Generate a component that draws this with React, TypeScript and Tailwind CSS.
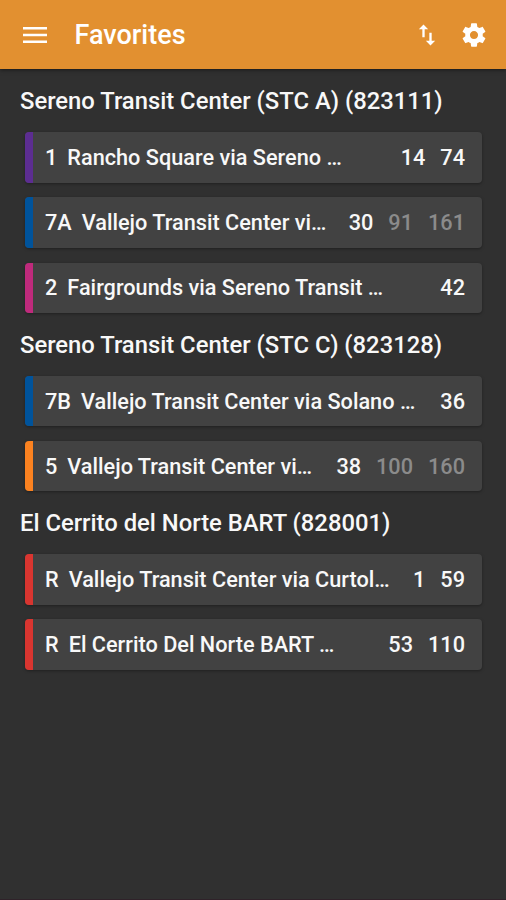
import React from "react";

type Arrival = { minutes: string; dim?: boolean };
type Route = { color: string; name: string; dest: string; times: Arrival[] };
type Stop = { title: string; routes: Route[] };

const stops: Stop[] = [
  { title: "Sereno Transit Center (STC A) (823111)", routes: [
    { color: "bg-[#5c2d91]", name: "1", dest: "Rancho Square via Sereno …", times: [{ minutes: "14" }, { minutes: "74" }] },
    { color: "bg-[#00539b]", name: "7A", dest: "Vallejo Transit Center vi…", times: [{ minutes: "30" }, { minutes: "91", dim: true }, { minutes: "161", dim: true }] },
    { color: "bg-[#bf2a7c]", name: "2", dest: "Fairgrounds via Sereno Transit …", times: [{ minutes: "42" }] },
  ] },
  { title: "Sereno Transit Center (STC C) (823128)", routes: [
    { color: "bg-[#00539b]", name: "7B", dest: "Vallejo Transit Center via Solano …", times: [{ minutes: "36" }] },
    { color: "bg-[#fb8220]", name: "5", dest: "Vallejo Transit Center vi…", times: [{ minutes: "38" }, { minutes: "100", dim: true }, { minutes: "160", dim: true }] },
  ] },
  { title: "El Cerrito del Norte BART (828001)", routes: [
    { color: "bg-[#d93530]", name: "R", dest: "Vallejo Transit Center via Curtol…", times: [{ minutes: "1" }, { minutes: "59" }] },
    { color: "bg-[#d93530]", name: "R", dest: "El Cerrito Del Norte BART …", times: [{ minutes: "53" }, { minutes: "110" }] },
  ] },
];

export default function App() {
  return (
    <div className="flex h-[900px] w-[506px] flex-col overflow-hidden border-b border-[#2f2229] bg-[#303030] font-['Roboto',sans-serif] font-medium text-[#f8f8f8]">
      <header className="flex h-[69px] shrink-0 items-center bg-[#e29030] pl-[23px] pr-[18.5px] text-white shadow-[0_1px_4px_rgba(0,0,0,0.5)]">
        <svg width="24" height="16" viewBox="0 0 24 16" fill="#fff"><path d="M0 0h24v2.6H0zM0 6.7h24v2.6H0zM0 13.4h24V16H0z" /></svg>
        <h1 className="ml-[27.5px] pt-[2px] text-[27px] leading-none">Favorites</h1>
        <svg className="ml-auto" width="28" height="28" viewBox="0 0 24 24" fill="#fff"><path d="M16 17.01V10h-2v7.01h-3L15 21l4-3.99h-3zM9 3L5 6.99h3V14h2V6.99h3L9 3z" /></svg>
        <svg className="ml-[18.5px]" width="28" height="28" viewBox="0 0 24 24" fill="#fff"><path d="M19.43 12.98c.04-.32.07-.64.07-.98s-.03-.66-.07-.98l2.11-1.65c.19-.15.24-.42.12-.64l-2-3.46c-.12-.22-.39-.3-.61-.22l-2.49 1c-.52-.4-1.08-.73-1.69-.98l-.38-2.65C14.46 2.18 14.25 2 14 2h-4c-.25 0-.46.18-.49.42l-.38 2.65c-.61.25-1.17.59-1.69.98l-2.49-1c-.23-.09-.49 0-.61.22l-2 3.46c-.13.22-.07.49.12.64l2.11 1.65c-.04.32-.07.65-.07.98s.03.66.07.98l-2.11 1.65c-.19.15-.24.42-.12.64l2 3.46c.12.22.39.3.61.22l2.49-1c.52.4 1.08.73 1.69.98l.38 2.65c.03.24.24.42.49.42h4c.25 0 .46-.18.49-.42l.38-2.65c.61-.25 1.17-.59 1.69-.98l2.49 1c.23.09.49 0 .61-.22l2-3.46c.12-.22.07-.49-.12-.64l-2.11-1.65zM12 15.5c-1.93 0-3.5-1.57-3.5-3.5s1.57-3.5 3.5-3.5 3.5 1.57 3.5 3.5-1.57 3.5-3.5 3.5z" /></svg>
      </header>
      <main className="flex flex-col pl-[20px] pr-[24px] pt-[0.4px]">
        {stops.map((s) => (
          <section key={s.title} className="flex flex-col">
            <h2 className="flex h-[63px] items-center whitespace-nowrap pt-[2px] text-[23.8px] leading-none">{s.title}</h2>
            <ul className="ml-[5px] flex flex-col gap-[14.7px]">
              {s.routes.map((r) => (
                <li key={r.dest} className="flex h-[50.4px] items-center overflow-hidden rounded-[4px] bg-[#424242] pr-[17px] text-[21.7px] leading-none shadow-[0_1px_3px_rgba(0,0,0,0.35)]">
                  <span className={"mr-[12px] h-full w-2 " + r.color} />
                  <span className="pt-[0.6px]">{r.name}</span>
                  <span className="ml-[10px] whitespace-nowrap pt-[0.6px]">{r.dest}</span>
                  <span className="ml-auto flex gap-[15px] pt-[0.6px]">
                    {r.times.map((t) => <span key={t.minutes} className={t.dim ? "text-[#8b8b8b]" : ""}>{t.minutes}</span>)}
                  </span>
                </li>
              ))}
            </ul>
          </section>
        ))}
      </main>
    </div>
  );
}
